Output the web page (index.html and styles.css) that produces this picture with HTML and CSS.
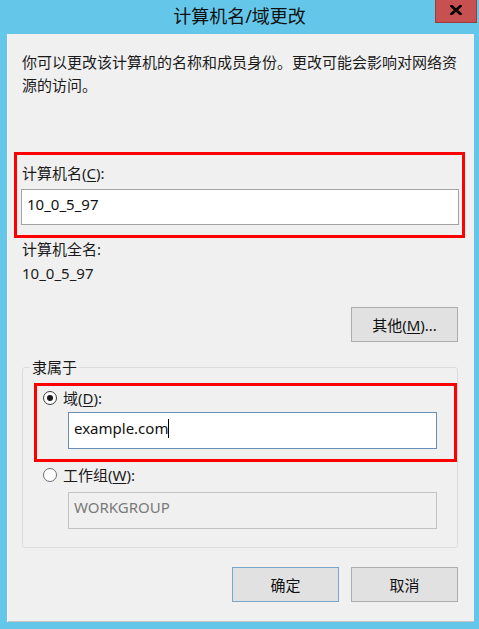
FILE: index.html
```html
<!DOCTYPE html>
<html lang="zh-CN">
<head>
<meta charset="utf-8">
<title>计算机名/域更改</title>
<link rel="stylesheet" href="styles.css">
</head>
<body>
<div class="window">
  <div class="titlebar">
    <span></span>
    <div class="title">计算机名/域更改</div>
    <div class="close">
      <svg width="12" height="10" viewBox="0 0 12 10"><path d="M1.5 1 L10.5 9 M10.5 1 L1.5 9" stroke="#000" stroke-width="2.6" stroke-linecap="square"/></svg>
    </div>
  </div>
  <div class="client">
    <p class="desc">你可以更改该计算机的名称和成员身份。更改可能会影响对网络资源的访问。</p>

    <div class="mark mark-name">
      <div class="label name-label">计算机名(<u>C</u>):</div>
      <div class="field field-name">10_0_5_97</div>
    </div>

    <div class="label full-label">计算机全名:</div>
    <div class="label full-value">10_0_5_97</div>

    <div class="more-row">
      <div class="btn">其他(<u>M</u>)...</div>
    </div>

    <fieldset class="group">
      <legend>隶属于</legend>
      <div class="mark mark-domain">
        <div class="radio-row">
          <span class="radio checked"></span>
          <span class="label">域(<u>D</u>):</span>
        </div>
        <div class="field field-domain">example.com<span class="caret"></span></div>
      </div>
      <div class="radio-row row-work">
        <span class="radio"></span>
        <span class="label">工作组(<u>W</u>):</span>
      </div>
      <div class="field field-work">WORKGROUP</div>
    </fieldset>

    <div class="actions">
      <div class="btn btn-default">确定</div>
      <div class="btn">取消</div>
    </div>
  </div>
</div>
</body>
</html>
```
FILE: styles.css
```css
html, body {
  margin: 0;
  padding: 0;
}

body {
  background: #64c7ea;
  font-family: "Noto Sans", "Noto Sans CJK SC", sans-serif;
  font-size: 15px;
  color: #1a1a1a;
}

.window {
  width: 479px;
  height: 629px;
  display: flex;
  flex-direction: column;
}

/* title bar */
.titlebar {
  height: 34px;
  display: grid;
  grid-template-columns: 1fr auto 1fr;
  align-items: start;
}

.title {
  font-size: 18px;
  line-height: 22px;
  padding-top: 5px;
  color: #111;
}

.close {
  justify-self: end;
  margin-right: 2px;
  width: 42px;
  height: 23px;
  box-sizing: border-box;
  background: #c75050;
  border: 1px solid #9a3c3c;
  border-top: none;
  display: flex;
  align-items: center;
  justify-content: center;
}

.close svg {
  display: block;
  margin-top: -2px;
}

/* client area */
.client {
  flex: 1;
  margin: 0 5px 7px 7px;
  background: #f0f0f0;
  box-shadow: inset 1px 0 0 #fafafa, inset 0 -1px 0 #c4c4c4;
  padding: 0 9px 0 7px;
}

.desc {
  margin: 0 0 0 8px;
  padding-top: 17px;
  width: 440px;
  line-height: 23px;
}

.label {
  line-height: 20px;
}

u {
  text-underline-offset: 2px;
}

/* red highlight frames */
.mark {
  border: 3px solid #ff0000;
}

.mark-name {
  margin-top: 55px;
  padding: 8px 3px 10px 4px;
}

.name-label {
  margin-left: 1px;
}

/* text boxes */
.field {
  box-sizing: border-box;
  background: #fff;
  border: 1px solid #a3a3a3;
  padding: 4px 5px 0;
  line-height: 20px;
  color: #111;
}

.field-name {
  margin-top: 6px;
  height: 36px;
}

.full-label {
  margin: 1px 0 0 8px;
}

.full-value {
  margin: 4px 0 0 8px;
}

/* buttons */
.btn {
  box-sizing: border-box;
  width: 107px;
  height: 35px;
  background: #e1e1e1;
  border: 1px solid #adadad;
  display: flex;
  align-items: center;
  justify-content: center;
  color: #111;
}

.btn-default {
  border-color: #7aa6cc;
}

.more-row {
  display: flex;
  justify-content: flex-end;
  margin: 24px 7px 0 0;
}

/* membership group */
.group {
  margin: 15px 7px 0 8px;
  padding: 0 0 18px 0;
  border: 1px solid #dcdcdc;
  border-radius: 3px;
  min-width: 0;
}

.group legend {
  margin-left: 7px;
  padding: 0 2px;
  line-height: 20px;
}

.mark-domain {
  margin: 6px 0 0 11px;
  padding: 2px 0 10px 0;
}

.radio-row {
  display: flex;
  align-items: center;
  height: 20px;
  gap: 6px;
  padding-left: 6px;
}

.row-work {
  margin-top: 3px;
  padding-left: 20px;
}

.radio {
  box-sizing: border-box;
  width: 14px;
  height: 14px;
  border-radius: 50%;
  border: 1px solid #6e6e6e;
  background: #fff;
  display: flex;
  align-items: center;
  justify-content: center;
}

.radio.checked {
  border-color: #3a3a3a;
}

.radio.checked::after {
  content: "";
  width: 6px;
  height: 6px;
  border-radius: 50%;
  background: #1a1a1a;
}

.field-domain {
  margin: 4px 17px 0 31px;
  height: 37px;
  padding-top: 5px;
  border-color: #6a8fb5;
}

.caret {
  display: inline-block;
  width: 1px;
  height: 19px;
  background: #000;
  vertical-align: -4px;
}

.field-work {
  margin: 7px 20px 0 45px;
  height: 37px;
  background: #f0f0f0;
  border-color: #c3c3c3;
  color: #7a7a7a;
}

.actions {
  display: flex;
  justify-content: flex-end;
  gap: 12px;
  margin: 19px 7px 0 0;
}
```
